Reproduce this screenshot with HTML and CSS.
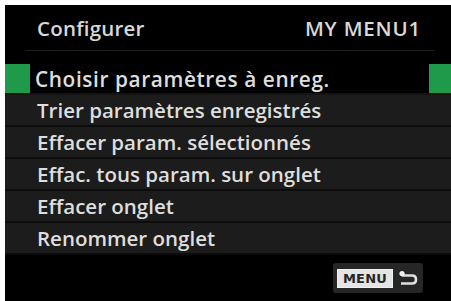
FILE: index.html
```html
<!DOCTYPE html>
<html>
<head>
<meta charset="utf-8">
<link rel="stylesheet" href="styles.css">
</head>
<body>
<div class="screen">
  <div class="header">
    <span class="title">Configurer</span>
    <span class="tab">MY MENU1</span>
  </div>
  <div class="list">
    <div class="row selected"><span class="cap"></span><span class="label">Choisir paramètres à enreg.</span><span class="cap end"></span></div>
    <div class="row"><span class="label">Trier paramètres enregistrés</span></div>
    <div class="row"><span class="label">Effacer param. sélectionnés</span></div>
    <div class="row"><span class="label">Effac. tous param. sur onglet</span></div>
    <div class="row"><span class="label">Effacer onglet</span></div>
    <div class="row"><span class="label">Renommer onglet</span></div>
  </div>
  <div class="footer">
    <div class="btn">
      <span class="menu">MENU</span>
      <svg class="ret" width="22" height="16" viewBox="0 0 22 16">
        <path d="M6 3 L6 5.5 L15 5.5 Q19 5.5 19 9.5 Q19 13.5 15 13.5 L4 13.5" fill="none" stroke="#e0e0e0" stroke-width="2.6"/>
        <circle cx="5" cy="3.5" r="2.6" fill="#f0f0f0"/>
      </svg>
    </div>
  </div>
</div>
</body>
</html>
```
FILE: styles.css
```css
html, body {
  margin: 0;
  padding: 0;
  background: #ffffff;
}
body {
  font-family: "Open Sans", "Noto Sans", sans-serif;
  color: #dcdcdc;
}
.screen {
  margin: 5px 0 0 5px;
  width: 446px;
  height: 296px;
  background: #000;
  display: flex;
  flex-direction: column;
}
.header {
  height: 44px;
  display: flex;
  justify-content: space-between;
  align-items: center;
  font-size: 20.5px;
  font-weight: 600;
  border-bottom: 1px solid #18201a;
  margin: 0 16px 0 20px;
  padding: 1px 14px 0 12px;
  color: #d8d8d8;
}
.title {
  letter-spacing: 0.2px;
}
.tab {
  letter-spacing: 0.8px;
}
.list {
  margin-top: 13px;
  display: flex;
  flex-direction: column;
}
.row {
  height: 30px;
  border-bottom: 2px solid #0c0c0c;
  background: #1c1c1c;
  display: flex;
  align-items: center;
  padding-left: 32px;
  font-size: 20.5px;
  font-weight: 600;
  letter-spacing: 0;
  white-space: nowrap;
}
.row.selected {
  background: #000;
  padding-left: 0;
  height: 29px;
  border-bottom: 2px solid #141414;
  font-size: 20.8px;
  letter-spacing: 0.6px;
}
.cap {
  width: 25px;
  align-self: stretch;
  background: #1f9a4a;
  margin-right: 5px;
}
.cap.end {
  margin-left: auto;
  margin-right: 0;
  width: 22px;
}
.label {
  color: #dedede;
}
.footer {
  flex: 1;
  display: flex;
  justify-content: flex-end;
  align-items: flex-start;
  padding: 8px 28px 0 0;
}
.btn {
  width: 90px;
  height: 30px;
  background: #262626;
  border-radius: 3px;
  display: flex;
  align-items: center;
  padding-left: 4px;
  box-sizing: border-box;
}
.menu {
  background: #e4e4e4;
  color: #262626;
  font-family: "DejaVu Sans", sans-serif;
  font-weight: bold;
  font-size: 13px;
  line-height: 17px;
  width: 56px;
  text-align: center;
  box-sizing: border-box;
  border: 1px solid #f0f0f0;
  letter-spacing: 0.2px;
}
.ret {
  margin-left: 4px;
}
```
